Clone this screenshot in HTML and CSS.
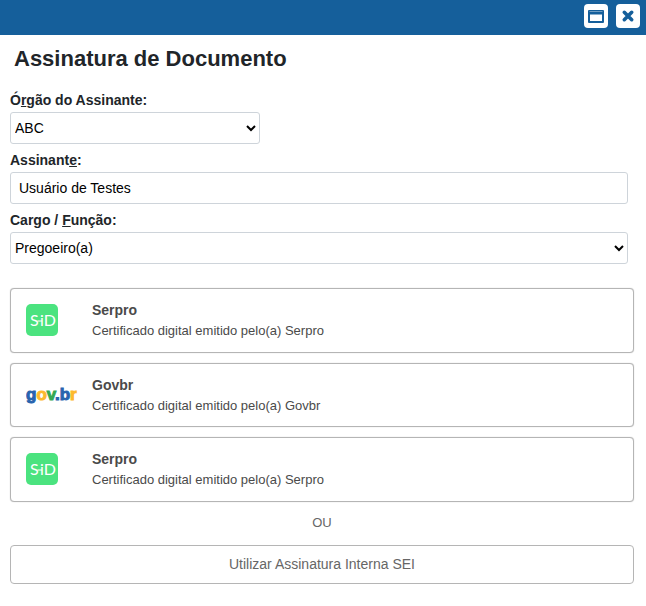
FILE: index.html
```html
<!DOCTYPE html>
<html lang="pt-BR">
<head>
<meta charset="utf-8">
<meta name="viewport" content="width=device-width, initial-scale=1">
<title>Assinatura de Documento</title>
<link rel="stylesheet" href="styles.css">
</head>
<body>
<header class="bar">
  <button class="bar-button" type="button" aria-label="Maximizar">
    <svg width="24" height="24" viewBox="0 0 24 24" aria-hidden="true">
      <path fill="#155f9b" fill-rule="evenodd" d="M5 6H19Q20 6 20 7V18Q20 19 19 19H5Q4 19 4 18V7Q4 6 5 6ZM6 10.500V17H18V10.500Z"/>
      <path stroke="#6f9cc2" stroke-width="1" d="M5.500 7.500H18.500"/>
    </svg>
  </button>
  <button class="bar-button" type="button" aria-label="Fechar">
    <svg width="24" height="24" viewBox="0 0 24 24" aria-hidden="true">
      <path stroke="#155f9b" stroke-width="3.600" stroke-linecap="round" d="M8.300 8.300L15.700 15.700M15.700 8.300L8.300 15.700"/>
    </svg>
  </button>
</header>
<main class="content">
  <h1 class="title">Assinatura de Documento</h1>
  <form class="form">
    <div class="field">
      <label class="label" for="orgao">Ó<u>r</u>gão do Assinante:</label>
      <select class="control control-short" id="orgao" accesskey="r"><option>ABC</option></select>
    </div>
    <div class="field">
      <label class="label" for="assinante">Assinant<u>e</u>:</label>
      <input class="control control-text" id="assinante" type="text" accesskey="e" value="Usuário de Testes">
    </div>
    <div class="field">
      <label class="label" for="cargo">Cargo / <u>F</u>unção:</label>
      <select class="control" id="cargo" accesskey="f"><option>Pregoeiro(a)</option></select>
    </div>
  </form>
  <div class="providers">
    <button class="provider" type="button">
      <span class="logo">
        <svg width="32" height="32" viewBox="0 0 32 32" aria-hidden="true">
          <rect width="32" height="32" rx="5" fill="#4be37f"/>
          <text class="sid" x="4" y="22">S</text>
          <path stroke="#fff" d="M11.500 17H16"/>
          <text class="sid" x="14" y="22">iD</text>
        </svg>
      </span>
      <span class="info"><strong class="name">Serpro</strong><span class="detail">Certificado digital emitido pelo(a) Serpro</span></span>
    </button>
    <button class="provider" type="button">
      <span class="logo">
        <svg width="52" height="32" viewBox="0 0 52 32" aria-hidden="true">
          <text class="govbr" x="0" y="21"><tspan class="blue">g</tspan><tspan class="yellow">o</tspan><tspan class="green">v</tspan><tspan class="blue">.b</tspan><tspan class="yellow">r</tspan></text>
        </svg>
      </span>
      <span class="info"><strong class="name">Govbr</strong><span class="detail">Certificado digital emitido pelo(a) Govbr</span></span>
    </button>
    <button class="provider" type="button">
      <span class="logo">
        <svg width="32" height="32" viewBox="0 0 32 32" aria-hidden="true">
          <rect width="32" height="32" rx="5" fill="#4be37f"/>
          <text class="sid" x="4" y="22">S</text>
          <path stroke="#fff" d="M11.500 17H16"/>
          <text class="sid" x="14" y="22">iD</text>
        </svg>
      </span>
      <span class="info"><strong class="name">Serpro</strong><span class="detail">Certificado digital emitido pelo(a) Serpro</span></span>
    </button>
  </div>
  <p class="or">OU</p>
  <button class="internal" type="button">Utilizar Assinatura Interna SEI</button>
</main>
</body>
</html>
```
FILE: styles.css
```css
* {
  box-sizing: border-box;
}

body {
  margin: 0;
  background: #fff;
  color: #212529;
  font-family: "Liberation Sans", Arial, sans-serif;
  font-size: 14px;
  line-height: 1.5;
}

button,
input,
select {
  font: inherit;
}

.bar {
  display: flex;
  justify-content: flex-end;
  gap: 8px;
  padding: 4px 6px 7px;
  background: #155f9b;
}

.bar-button {
  display: block;
  width: 24px;
  height: 24px;
  padding: 0;
  border: 0;
  border-radius: 4px;
  background: #fff;
}

.bar-button svg {
  display: block;
}

.content {
  padding: 8px 12px 20px 10px;
}

.title {
  margin: 0 4px 16px;
  font-size: 22px;
  line-height: 31px;
}

.form {
  display: flex;
  flex-direction: column;
  gap: 6px;
  margin: 0 6px 24px 0;
}

.label {
  display: block;
  padding-bottom: 1px;
  font-weight: bold;
}

.control {
  display: block;
  width: 100%;
  height: 32px;
  padding: 0;
  border: 1px solid #ced4da;
  border-radius: 3px;
  background: #fff;
  color: #000;
}

.control-short {
  max-width: 250px;
}

.control-text {
  padding: 0 8px;
}

.providers {
  display: flex;
  flex-direction: column;
  gap: 10px;
}

.provider {
  display: flex;
  align-items: center;
  width: 100%;
  padding: 11px 15px;
  border: 1px solid #b5b5b5;
  border-radius: 4px;
  background: #fff;
  box-shadow: 0 0 1px #bbb;
  color: #4a4a4a;
  text-align: left;
}

.logo {
  flex: none;
  width: 66px;
}

.logo svg {
  display: block;
}

.sid {
  fill: #fff;
  font-family: Lato, sans-serif;
  font-size: 16px;
}

.govbr {
  font-size: 17px;
  font-weight: bold;
  stroke-width: 1px;
}

.blue {
  fill: #2864ae;
  stroke: #2864ae;
}

.yellow {
  fill: #fdb92e;
  stroke: #fdb92e;
}

.green {
  fill: #35a852;
  stroke: #35a852;
}

.name,
.detail {
  display: block;
}

.detail {
  font-size: 13px;
}

.or {
  margin: 11px 0 13px;
  color: #666;
  font-size: 13px;
  text-align: center;
}

.internal {
  display: block;
  width: 100%;
  padding: 8px;
  border: 1px solid #b5b5b5;
  border-radius: 4px;
  background: #fff;
  color: #666;
}
```
